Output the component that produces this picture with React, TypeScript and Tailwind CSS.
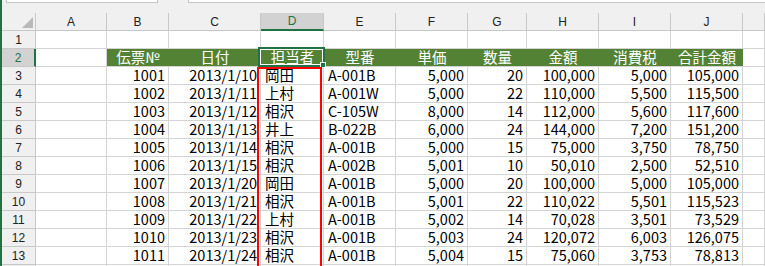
const GRID = 'grid grid-cols-[34px_71px_62px_92px_63px_72px_72px_59px_72px_72px_72px_1fr]'
const FONT = "font-['Noto_Sans_CJK_JP',sans-serif]"

const letters = ['A', 'B', 'C', 'D', 'E', 'F', 'G', 'H', 'I', 'J', '']

const heads = ['伝票№', '日付', '担当者', '型番', '単価', '数量', '金額', '消費税', '合計金額']

const rows: string[][] = [
  ['1001', '2013/1/10', '岡田', 'A-001B', '5,000', '20', '100,000', '5,000', '105,000'],
  ['1002', '2013/1/11', '上村', 'A-001W', '5,000', '22', '110,000', '5,500', '115,500'],
  ['1003', '2013/1/12', '相沢', 'C-105W', '8,000', '14', '112,000', '5,600', '117,600'],
  ['1004', '2013/1/13', '井上', 'B-022B', '6,000', '24', '144,000', '7,200', '151,200'],
  ['1005', '2013/1/14', '相沢', 'A-001B', '5,000', '15', '75,000', '3,750', '78,750'],
  ['1006', '2013/1/15', '相沢', 'A-002B', '5,001', '10', '50,010', '2,500', '52,510'],
  ['1007', '2013/1/20', '岡田', 'A-001B', '5,000', '20', '100,000', '5,000', '105,000'],
  ['1008', '2013/1/21', '相沢', 'A-001B', '5,001', '22', '110,022', '5,501', '115,523'],
  ['1009', '2013/1/22', '上村', 'A-001B', '5,002', '14', '70,028', '3,501', '73,529'],
  ['1010', '2013/1/23', '相沢', 'A-001B', '5,003', '24', '120,072', '6,003', '126,075'],
  ['1011', '2013/1/24', '相沢', 'A-001B', '5,004', '15', '75,060', '3,753', '78,813'],
]

// columns D and E are text (left aligned), the rest numbers
const leftCols = [2, 3]

function RowHead({ n, active }: { n?: number; active?: boolean }) {
  return (
    <div
      className={
        active
          ? 'h-[18px] bg-[#d2d2d2] border-r-2 border-r-[#217346] border-b border-b-[#c8c8c8] flex items-center justify-center text-[12px] text-[#217346] font-[\'Liberation_Sans\',sans-serif]'
          : 'h-[18px] bg-[#f0f0f0] border-r border-r-[#c8c8c8] border-b border-b-[#c8c8c8] flex items-center justify-center text-[12px] text-[#222] font-[\'Liberation_Sans\',sans-serif]'
      }
    >
      {n}
    </div>
  )
}

function Blank() {
  return <div className="h-[18px] border-r border-b border-[#d4d4d4]" />
}

export default function App() {
  return (
    <div className={`relative w-[765px] h-[266px] overflow-hidden bg-white flex ${FONT}`}>
      <div className="w-[2px] shrink-0 bg-[#217346]" />
      <div className="flex-1 min-w-0">
        {/* formula bar remains */}
        <div className="h-[13px] bg-[#f0f0f0] flex items-start">
          <div className="ml-[4px] w-[152px] h-[3px] bg-white border-x border-b border-[#c6c6c6]" />
          <div className="ml-[30px] flex-1 h-[3px] bg-white border-l border-b border-[#c6c6c6]" />
        </div>

        {/* column letters */}
        <div className={GRID}>
          <div className="h-[18px] bg-[#f0f0f0] border-r border-b border-[#c8c8c8] relative">
            <svg className="absolute left-[20px] top-[4px]" width="11" height="11" viewBox="0 0 11 11">
              <polygon points="11,0 11,11 0,11" fill="#b9b9b9" />
            </svg>
          </div>
          {letters.map((l, i) =>
            l === 'D' ? (
              <div
                key={i}
                className="h-[18px] bg-[#d2d2d2] border-r border-r-[#c8c8c8] border-b-2 border-b-[#217346] flex items-center justify-center text-[12px] text-[#217346] font-['Liberation_Sans',sans-serif]"
              >
                {l}
              </div>
            ) : (
              <div
                key={i}
                className="h-[18px] bg-[#f0f0f0] border-r border-b border-[#c8c8c8] flex items-center justify-center text-[12px] text-[#222] font-['Liberation_Sans',sans-serif]"
              >
                {l}
              </div>
            )
          )}
        </div>

        {/* row 1 */}
        <div className={GRID}>
          <RowHead n={1} />
          {letters.map((_, i) => <Blank key={i} />)}
        </div>

        {/* row 2: green header */}
        <div className={GRID}>
          <RowHead n={2} active />
          <Blank />
          {heads.map((h, i) => (
            <div
              key={i}
              className="h-[18px] bg-[#548235] border-b border-b-[#d4d4d4] flex items-end justify-center pb-[1px] text-[14.5px] leading-[17px] text-white"
            >
              {h}
            </div>
          ))}
          <Blank />
        </div>

        {rows.map((r, ri) => (
          <div key={ri} className={GRID}>
            <RowHead n={ri + 3} />
            <Blank />
            {r.map((v, ci) => (
              <div
                key={ci}
                className={
                  leftCols.includes(ci)
                    ? 'h-[18px] border-r border-b border-[#d4d4d4] flex items-end pl-[4px] pb-[1px] text-[14.5px] leading-[17px] text-black whitespace-nowrap tabular-nums'
                    : 'h-[18px] border-r border-b border-[#d4d4d4] flex items-end justify-end pr-[3px] pb-[1px] text-[14.5px] leading-[17px] text-black whitespace-nowrap tabular-nums'
                }
              >
                {v}
              </div>
            ))}
            <Blank />
          </div>
        ))}

        {/* row 14, only its top edge is in view */}
        <div className={GRID}>
          <RowHead />
          {letters.map((_, i) => <Blank key={i} />)}
        </div>
      </div>

      {/* selected cell D2 */}
      <div className="absolute left-[258px] top-[47px] w-[67px] h-[20px] border-2 border-[#217346]">
        <div className="w-full h-full border border-white" />
      </div>
      <div className="absolute left-[320px] top-[62px] w-[6px] h-[6px] bg-[#217346] border border-white" />

      {/* red outline on 担当者 column */}
      <div className="absolute left-[257px] top-[67px] w-[65px] h-[240px] border-2 border-[#ff0000]" />
    </div>
  )
}
